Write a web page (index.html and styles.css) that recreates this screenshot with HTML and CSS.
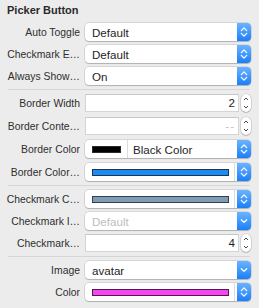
FILE: index.html
```html
<!DOCTYPE html>
<html lang="en">
<head>
    <meta charset="UTF-8">
    <title>Picker Button</title>
    <link rel="stylesheet" href="styles.css">
</head>
<body>
    <div class="inspector">
        <div class="title">Picker Button</div>

        <div class="group">
            <div class="row">
                <span class="name">Auto Toggle</span>
                <div class="popup"><span class="value">Default</span><span class="blue-btn"><svg width="8" height="12" viewBox="0 0 8 12"><path d="M1.3 4.6L4 1.9L6.7 4.6M1.3 7.4L4 10.1L6.7 7.4" /></svg></span></div>
            </div>
            <div class="row">
                <span class="name">Checkmark E…</span>
                <div class="popup"><span class="value">Default</span><span class="blue-btn"><svg width="8" height="12" viewBox="0 0 8 12"><path d="M1.3 4.6L4 1.9L6.7 4.6M1.3 7.4L4 10.1L6.7 7.4" /></svg></span></div>
            </div>
            <div class="row">
                <span class="name">Always Show…</span>
                <div class="popup"><span class="value">On</span><span class="blue-btn"><svg width="8" height="12" viewBox="0 0 8 12"><path d="M1.3 4.6L4 1.9L6.7 4.6M1.3 7.4L4 10.1L6.7 7.4" /></svg></span></div>
            </div>
        </div>

        <div class="sep"></div>

        <div class="group wide">
            <div class="row">
                <span class="name">Border Width</span>
                <div class="field-wrap">
                    <div class="field">2</div>
                    <span class="stepper"><svg width="8" height="16" viewBox="0 0 8 16"><path d="M2 5L4 3L6 5M2 11L4 13L6 11" /></svg></span>
                </div>
            </div>
            <div class="row">
                <span class="name">Border Conte…</span>
                <div class="field-wrap">
                    <div class="field placeholder">--</div>
                    <span class="stepper"><svg width="8" height="16" viewBox="0 0 8 16"><path d="M2 5L4 3L6 5M2 11L4 13L6 11" /></svg></span>
                </div>
            </div>
            <div class="row">
                <span class="name">Border Color</span>
                <div class="popup">
                    <span class="well"><span class="swatch black"></span></span>
                    <span class="value named">Black Color</span>
                    <span class="blue-btn"><svg width="8" height="12" viewBox="0 0 8 12"><path d="M1.3 4.6L4 1.9L6.7 4.6M1.3 7.4L4 10.1L6.7 7.4" /></svg></span>
                </div>
            </div>
            <div class="row">
                <span class="name">Border Color…</span>
                <div class="popup">
                    <span class="well full"><span class="swatch blue"></span></span>
                    <span class="blue-btn"><svg width="8" height="12" viewBox="0 0 8 12"><path d="M1.3 4.6L4 1.9L6.7 4.6M1.3 7.4L4 10.1L6.7 7.4" /></svg></span>
                </div>
            </div>
        </div>

        <div class="sep"></div>

        <div class="group">
            <div class="row">
                <span class="name">Checkmark C…</span>
                <div class="popup">
                    <span class="well full"><span class="swatch slate"></span></span>
                    <span class="blue-btn"><svg width="8" height="12" viewBox="0 0 8 12"><path d="M1.3 4.6L4 1.9L6.7 4.6M1.3 7.4L4 10.1L6.7 7.4" /></svg></span>
                </div>
            </div>
            <div class="row">
                <span class="name">Checkmark I…</span>
                <div class="popup disabled"><span class="value">Default</span><span class="blue-btn"><svg width="8" height="10" viewBox="0 0 8 10"><path d="M1.3 3.7L4 6.4L6.7 3.7" /></svg></span></div>
            </div>
            <div class="row">
                <span class="name">Checkmark…</span>
                <div class="field-wrap">
                    <div class="field">4</div>
                    <span class="stepper"><svg width="8" height="16" viewBox="0 0 8 16"><path d="M2 5L4 3L6 5M2 11L4 13L6 11" /></svg></span>
                </div>
            </div>
        </div>

        <div class="sep"></div>

        <div class="group">
            <div class="row">
                <span class="name">Image</span>
                <div class="popup"><span class="value">avatar</span><span class="blue-btn"><svg width="8" height="10" viewBox="0 0 8 10"><path d="M1.3 3.7L4 6.4L6.7 3.7" /></svg></span></div>
            </div>
            <div class="row">
                <span class="name">Color</span>
                <div class="popup">
                    <span class="well full"><span class="swatch magenta"></span></span>
                    <span class="blue-btn"><svg width="8" height="12" viewBox="0 0 8 12"><path d="M1.3 4.6L4 1.9L6.7 4.6M1.3 7.4L4 10.1L6.7 7.4" /></svg></span>
                </div>
            </div>
        </div>
    </div>
</body>
</html>
```

FILE: styles.css
```css
body { margin: 0; background: #ececec; font-family: "Liberation Sans", Arial, sans-serif; color: #2b2b2b; }
.inspector { width: 259px; height: 308px; }
.title { font-size: 11px; font-weight: bold; line-height: 13px; padding: 4px 0 6px 7px; color: #2a2a2a; }
.group { display: flex; flex-direction: column; gap: 4px; padding: 0 8px 4px 0; }
.group.wide { gap: 5px; }
.sep { height: 1px; background: #d6d6d6; margin: 0 9px 4px 8px; }
.row { display: grid; grid-template-columns: 80px 166px; column-gap: 5px; align-items: center; height: 18px; }
.name { font-size: 10.4px; text-align: right; white-space: nowrap; overflow: hidden; color: #2e2e2e; }

.popup { display: flex; align-items: center; height: 18px; background: #fff; border-radius: 4px; box-shadow: 0 0 0 0.5px rgba(0,0,0,0.18), 0 1px 1px rgba(0,0,0,0.18); }
.value { flex: 1; font-size: 11.6px; padding-left: 7px; color: #1e1e1e; white-space: nowrap; }
.value.named { padding-left: 5px; }
.popup.disabled .value { color: #bdbdbd; }
.blue-btn { width: 14px; align-self: stretch; display: flex; align-items: center; justify-content: center; border-radius: 0 4px 4px 0; background: linear-gradient(#6ab4fe, #1b7ff9); }
.blue-btn svg path { fill: none; stroke: #fff; stroke-width: 1.3; stroke-linecap: round; stroke-linejoin: round; }

.well { display: flex; align-items: center; align-self: stretch; padding: 0 6px 0 7px; border-right: 1px solid #dcdcdc; }
.well.full { flex: 1; padding-right: 5px; margin-right: 2px; }
.swatch { display: block; width: 27px; height: 5px; border: 1px solid #2a2a2a; }
.well.full .swatch { flex: 1; width: auto; }
.swatch.black { background: #000; }
.swatch.blue { background: #1a8cf2; border-color: #1d3550; }
.swatch.slate { background: #7f9bb5; border-color: #34404c; }
.swatch.magenta { background: #f845f0; border-color: #4a1e48; }

.field-wrap { display: flex; align-items: center; gap: 2px; height: 18px; }
.field { flex: 1; height: 18px; box-sizing: border-box; background: #fff; border: 1px solid #d4d4d4; border-top-color: #c8c8c8; font-size: 11.6px; line-height: 16px; text-align: right; padding-right: 3px; color: #1e1e1e; }
.field.placeholder { color: #c4c4c4; letter-spacing: 1px; }
.stepper { width: 10px; height: 18px; box-sizing: border-box; display: flex; align-items: center; justify-content: center; background: #fff; border-radius: 5px; box-shadow: 0 0 0 0.5px rgba(0,0,0,0.2), 0 1px 1px rgba(0,0,0,0.15); }
.stepper svg path { fill: none; stroke: #4a4a4a; stroke-width: 1; }
```
